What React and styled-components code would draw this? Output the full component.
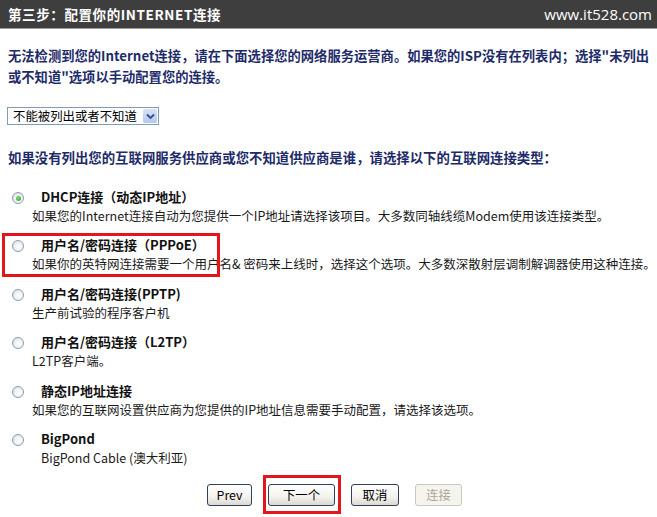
import React from 'react';
import styled, { createGlobalStyle } from 'styled-components';

const Global = createGlobalStyle`
  html, body { margin: 0; padding: 0; background: #fff; }
  body { font-family: "Noto Sans CJK SC", "Liberation Sans", sans-serif; }
`;

const Page = styled.div`
  position: relative;
  width: 657px;
  height: 517px;
  overflow: hidden;
  background: #fff;
`;

const Header = styled.header`
  height: 28px;
  background: #3e3e3e;
  border-bottom: 1px solid #9c9c9c;
  display: flex;
  align-items: center;
  justify-content: space-between;
  padding: 0 5px 0 8px;
`;

const Title = styled.h1`
  margin: 0;
  font-size: 13.5px;
  font-weight: 700;
  color: #fff;
  letter-spacing: 0.6px;
`;

const Site = styled.span`
  font-family: "Open Sans", sans-serif;
  font-size: 15px;
  color: #fff;
`;

const Main = styled.main`
  display: flex;
  flex-direction: column;
  padding-left: 8px;
`;

const Intro = styled.p`
  margin: 16px 0 0;
  font-size: 13.3px;
  line-height: 21px;
  font-weight: 700;
  color: #1e2b6a;
  white-space: nowrap;
`;

const Select = styled.div`
  margin: 20px 0 0 -1px;
  width: 152px;
  height: 18px;
  box-sizing: border-box;
  border: 1px solid #7f9db9;
  display: flex;
  align-items: center;
  justify-content: space-between;
  padding: 0 1px 0 5px;
  font-size: 12.4px;
  line-height: 16px;
  color: #000;
  background: #fff;
`;

const DropBtn = styled.span`
  width: 14px;
  height: 14px;
  border-radius: 2px;
  background: linear-gradient(#d6e2f8, #b4c8ee);
  display: flex;
  align-items: center;
  justify-content: center;
`;

const Heading = styled.h2`
  margin: 22px 0 0;
  font-size: 13.4px;
  line-height: 20px;
  font-weight: 700;
  color: #1e2b6a;
  white-space: nowrap;
`;

const OptionList = styled.div`
  margin-top: 20px;
  display: flex;
  flex-direction: column;
  gap: 10.4px;
`;

const Option = styled.div`
  display: flex;
  flex-direction: column;
`;

const OptionHead = styled.label`
  display: flex;
  align-items: center;
  height: 19px;
`;

const Radio = styled.span`
  margin: 3px 0 0 4px;
  width: 12px;
  height: 12px;
  box-sizing: border-box;
  border-radius: 50%;
  border: 1px solid #8d9cb2;
  background: radial-gradient(circle at 60% 60%, #fff 0%, #f2f4f6 40%, #d3d8de 100%);
  display: flex;
  align-items: center;
  justify-content: center;
  &::after {
    content: "";
    width: 5px;
    height: 5px;
    border-radius: 50%;
    background: radial-gradient(circle at 40% 40%, #7fdc6f, #2d9a2d);
    display: ${p => (p.$checked ? 'block' : 'none')};
  }
`;

const OptLabel = styled.span`
  margin-left: 17px;
  font-size: 13px;
  line-height: 19px;
  font-weight: 700;
  color: #111;
  white-space: nowrap;
`;

const Desc = styled.div`
  padding-left: ${p => p.$indent}px;
  font-size: 12.5px;
  line-height: 19px;
  color: #1a1a1a;
  white-space: nowrap;
`;

const ButtonRow = styled.div`
  margin: 17px 0 0 199px;
  display: flex;
  gap: 16px;
`;

const Button = styled.button`
  height: 22px;
  width: ${p => p.$w}px;
  padding: 0;
  box-sizing: border-box;
  border: 1px solid ${p => (p.disabled ? '#cac8bb' : '#2f3f5e')};
  border-radius: 3px;
  background: ${p =>
    p.disabled ? '#f5f4ef' : 'linear-gradient(#ffffff, #f3f2ee 60%, #dcd8cf)'};
  color: ${p => (p.disabled ? '#aca899' : '#000')};
  font-family: "Noto Sans CJK SC", sans-serif;
  font-size: 12.4px;
  line-height: 1;
`;

const Annotation = styled.div`
  position: absolute;
  box-sizing: border-box;
  border: 3px solid #e3161b;
  left: ${p => p.$x}px;
  top: ${p => p.$y}px;
  width: ${p => p.$w}px;
  height: ${p => p.$h}px;
  pointer-events: none;
`;

const options = [
  {
    label: 'DHCP连接（动态IP地址）',
    desc: '如果您的Internet连接自动为您提供一个IP地址请选择该项目。大多数同轴线缆Modem使用该连接类型。',
    checked: true,
  },
  {
    label: '用户名/密码连接（PPPoE）',
    desc: '如果你的英特网连接需要一个用户名& 密码来上线时，选择这个选项。大多数深散射层调制解调器使用这种连接。',
  },
  { label: '用户名/密码连接(PPTP)', desc: '生产前试验的程序客户机' },
  { label: '用户名/密码连接（L2TP）', desc: 'L2TP客户端。' },
  { label: '静态IP地址连接', desc: '如果您的互联网设置供应商为您提供的IP地址信息需要手动配置，请选择该选项。' },
  { label: 'BigPond', desc: 'BigPond Cable (澳大利亚)', indent: 33 },
];

export default function App() {
  return (
    <Page>
      <Global />
      <Header>
        <Title>第三步：配置你的INTERNET连接</Title>
        <Site>www.it528.com</Site>
      </Header>
      <Main>
        <Intro>
          无法检测到您的Internet连接，请在下面选择您的网络服务运营商。如果您的ISP没有在列表内；选择"未列出
          <br />
          或不知道"选项以手动配置您的连接。
        </Intro>
        <Select>
          <span>不能被列出或者不知道</span>
          <DropBtn>
            <svg width="9" height="7" viewBox="0 0 9 7">
              <path d="M1 1.5 L4.5 5 L8 1.5" fill="none" stroke="#33508c" strokeWidth="1.8" />
            </svg>
          </DropBtn>
        </Select>
        <Heading>如果没有列出您的互联网服务供应商或您不知道供应商是谁，请选择以下的互联网连接类型：</Heading>
        <OptionList>
          {options.map(o => (
            <Option key={o.label}>
              <OptionHead>
                <Radio $checked={o.checked} />
                <OptLabel>{o.label}</OptLabel>
              </OptionHead>
              <Desc $indent={o.indent ?? 24}>{o.desc}</Desc>
            </Option>
          ))}
        </OptionList>
        <ButtonRow>
          <Button $w={45}>Prev</Button>
          <Button $w={67}>下一个</Button>
          <Button $w={48}>取消</Button>
          <Button $w={47} disabled>连接</Button>
        </ButtonRow>
      </Main>
      <Annotation $x={2} $y={233} $w={218} $h={44} />
      <Annotation $x={263} $y={475} $w={78} $h={39} />
    </Page>
  );
}
